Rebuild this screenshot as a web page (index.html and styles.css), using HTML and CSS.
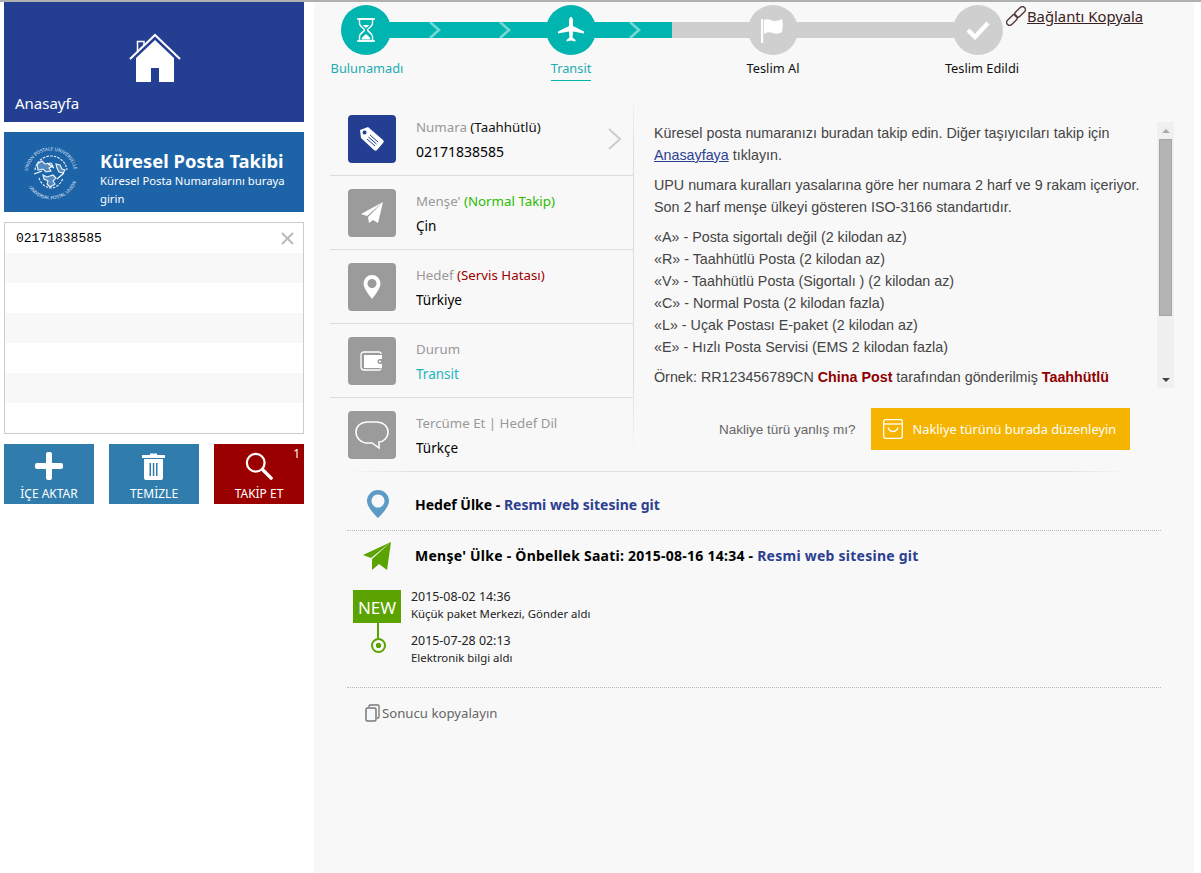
FILE: index.html
```html
<!DOCTYPE html>
<html lang="tr">
<head>
<meta charset="utf-8">
<title>Küresel Posta Takibi</title>
<link rel="stylesheet" href="styles.css">
</head>
<body>
<div class="page">
  <aside class="side">
    <a class="home">
      <svg class="home-ico" width="52" height="50" viewBox="0 0 52 50"><path d="M8.500 18V8.500h6.500v4" fill="none" stroke="#fff" stroke-width="1.500"/><path d="M1 26L26 2l25 24" fill="none" stroke="#fff" stroke-width="2"/><path fill="#fff" fill-rule="evenodd" d="M7 25L26 7l19 18v24H7zM22 35v14h8V35z"/></svg>
      <span class="home-label">Anasayfa</span>
    </a>
    <div class="upu">
      <svg class="upu-logo" width="56" height="56" viewBox="0 0 56 56">
        <defs><path id="upuring" d="M4.500 30a23.500 23.500 0 1 1 47 0"/><path id="upuring2" d="M2 34a26.500 26.500 0 0 0 52 0"/></defs>
        <text class="upu-ring"><textPath href="#upuring" startOffset="3">UNION POSTALE UNIVERSELLE</textPath></text>
        <text class="upu-ring"><textPath href="#upuring2" startOffset="10">UNIVERSAL POSTAL UNION</textPath></text>
        <path d="M12 26c1-8 8-14 16-14s15 6 16 14M16 34c2 6 7 10 12 10s10-4 12-10" fill="none" stroke="#e3edf6" stroke-width="1.200" stroke-dasharray="2.500 1.200"/>
        <path d="M14 20l5-3 3 3 6-1 2 3-4 2 2 3-5 1-3-3-5 1zM20 31l4 2 6-2 3 3-3 3 2 3-5 3-3-3 1-3-4-2zM33 20l4 1 2 4 3 1-2 3-4-1-2-4z" fill="#fff" fill-opacity=".25" stroke="#eef4fa" stroke-width="1.100"/>
        <path d="M11 30l8-3M34 35l7-6M24 19l7 5" stroke="#fff" stroke-width="1.100" fill="none"/>
      </svg>
      <div class="upu-copy">
        <div class="upu-title">Küresel Posta Takibi</div>
        <div class="upu-sub">Küresel Posta Numaralarını buraya girin</div>
      </div>
    </div>
    <div class="numlist">
      <div class="numrow"><span>02171838585</span>
        <svg class="clear" width="13" height="13" viewBox="0 0 13 13"><path d="M1 1l11 11M12 1L1 12" stroke="#bbb" stroke-width="2"/></svg>
      </div>
      <div class="numrow"></div><div class="numrow"></div><div class="numrow"></div>
      <div class="numrow"></div><div class="numrow"></div><div class="numrow"></div>
    </div>
    <div class="actions">
      <a class="act act-blue">
        <svg width="28" height="28" viewBox="0 0 28 28"><path d="M11 2a2 2 0 0 1 2-2h2a2 2 0 0 1 2 2v9h9a2 2 0 0 1 2 2v2a2 2 0 0 1-2 2h-9v9a2 2 0 0 1-2 2h-2a2 2 0 0 1-2-2v-9H2a2 2 0 0 1-2-2v-2a2 2 0 0 1 2-2h9z" fill="#fff"/></svg>
        <span>İÇE AKTAR</span>
      </a>
      <a class="act act-blue">
        <svg width="24" height="28" viewBox="0 0 24 28"><path d="M0 3h8V1.500h7V3h8v3H0z" fill="#fff"/><path fill="#fff" fill-rule="evenodd" d="M2 7h19v19a2 2 0 0 1-2 2H4a2 2 0 0 1-2-2zM7.500 11v13h1.500V11zM10.800 11v13h1.500V11zM14 11v13h1.500V11z"/></svg>
        <span>TEMİZLE</span>
      </a>
      <a class="act act-red">
        <svg width="30" height="30" viewBox="0 0 30 30"><circle cx="11.500" cy="11.500" r="9.500" fill="none" stroke="#fff" stroke-width="2.400"/><path d="M19 19l9 9" stroke="#fff" stroke-width="3.600" stroke-linecap="round"/></svg>
        <span>TAKİP ET</span>
        <b class="count">1</b>
      </a>
    </div>
  </aside>

  <main class="main">
    <div class="topbar">
      <div class="steps">
        <div class="track">
          <i class="track-on"></i>
          <svg class="chev chev1" width="12" height="16" viewBox="0 0 12 16"><path d="M1 0l9 8-9 8" fill="none" stroke="#74d8d3" stroke-width="2.600"/></svg>
          <svg class="chev chev2" width="12" height="16" viewBox="0 0 12 16"><path d="M1 0l9 8-9 8" fill="none" stroke="#74d8d3" stroke-width="2.600"/></svg>
          <svg class="chev chev3" width="12" height="16" viewBox="0 0 12 16"><path d="M1 0l9 8-9 8" fill="none" stroke="#74d8d3" stroke-width="2.600"/></svg>
        </div>
        <div class="step step-on step-a">
          <div class="dot"><svg width="20" height="24" viewBox="0 0 20 24"><path d="M1 1h18M1 23h18" stroke="#fff" stroke-width="1.400"/><path d="M3.500 1v4.500c0 3 5 5 5 6.500s-5 3.500-5 6.500V23h13v-4.500c0-3-5-5-5-6.500s5-3.500 5-6.500V1z" fill="none" stroke="#fff" stroke-width="1.400"/><path d="M5.500 21.500c.5-3 3.500-4 4.500-5.500 1 1.500 4 2.500 4.500 5.500zM6.500 7h7l-3.500 3z" fill="#fff"/></svg></div>
          <span class="step-label">Bulunamadı</span>
        </div>
        <div class="step step-on step-b step-current">
          <div class="dot"><svg width="26" height="26" viewBox="0 0 26 26"><path d="M13 0c1.400 0 2 2 2 4v5l11 5.500v2L15 14.500l-.5 6 3 2.500v1.500l-4.500-1-4.500 1V23l3-2.500-.5-6L0 16.500v-2L11 9V4c0-2 .6-4 2-4z" fill="#fff"/></svg></div>
          <span class="step-label">Transit</span>
        </div>
        <div class="step step-c">
          <div class="dot"><svg width="24" height="26" viewBox="0 0 24 26"><path d="M1 2v24" stroke="#fff" stroke-width="2.400"/><path d="M3 3c5-2 7 1 10 1s6-1 8-2c1 4 1 8 0 13-3 2-6 2-9 1-3-1-6-1-9 1z" fill="#fff"/></svg></div>
          <span class="step-label">Teslim Al</span>
        </div>
        <div class="step step-d">
          <div class="dot"><svg width="24" height="20" viewBox="0 0 24 20"><path d="M2 10l7 7L22 3" fill="none" stroke="#fff" stroke-width="4.400"/></svg></div>
          <span class="step-label">Teslim Edildi</span>
        </div>
      </div>
      <a class="copylink">
        <svg width="20" height="20" viewBox="0 0 20 20"><g fill="none" stroke="#553a3a" stroke-width="1.400" transform="rotate(-45 10 10)"><rect x="-2" y="7" width="12.500" height="6" rx="3"/><rect x="9.500" y="7" width="12.500" height="6" rx="3"/></g></svg>
        <span>Bağlantı Kopyala</span>
      </a>
    </div>

    <div class="detail">
      <div class="info">
        <div class="irow">
          <div class="iico iico-on"><svg width="30" height="30" viewBox="0 0 30 30"><path fill="#fff" fill-rule="evenodd" d="M3 6l8-3 15 13c1 1 1 2 0 3l-6 7c-1 1-2 1-3 0L4 14zM7.500 6.500a2 2 0 1 0 .1 0z"/><path d="M13 11l8 7M11.500 13l8 7M10 15l8 7" stroke="#24408f" stroke-width="1"/></svg></div>
          <div class="itext"><div class="ilabel">Numara <em class="c-dark">(Taahhütlü)</em></div><div class="ivalue ivalue-num">02171838585</div></div>
          <svg class="ichev" width="14" height="22" viewBox="0 0 14 22"><path d="M1 1l11 10L1 21" fill="none" stroke="#ccc" stroke-width="2"/></svg>
        </div>
        <div class="irow">
          <div class="iico"><svg width="24" height="24" viewBox="0 0 24 24"><path d="M23 1L1 13l6 2zM23 1L8 16l1 6 4-3 5 3z" fill="#fff"/></svg></div>
          <div class="itext"><div class="ilabel">Menşe' <em class="c-green">(Normal Takip)</em></div><div class="ivalue">Çin</div></div>
        </div>
        <div class="irow">
          <div class="iico"><svg width="18" height="24" viewBox="0 0 18 24"><path fill="#fff" fill-rule="evenodd" d="M9 0a8.500 8.500 0 0 1 8.500 8.500C17.500 14 9 24 9 24S.5 14 .5 8.500A8.500 8.500 0 0 1 9 0zm0 4a4.500 4.500 0 1 0 .01 0z"/></svg></div>
          <div class="itext"><div class="ilabel">Hedef <em class="c-red">(Servis Hatası)</em></div><div class="ivalue">Türkiye</div></div>
        </div>
        <div class="irow">
          <div class="iico"><svg width="24" height="20" viewBox="0 0 24 20"><path d="M21 3V2.500C21 1.500 20 1 19 1H4C2 1 1 2 1 4v12c0 2 1 3 3 3h15c1 0 2-.5 2-1.500" fill="none" stroke="#fff" stroke-width="1.300"/><path fill="#fff" fill-rule="evenodd" d="M4 4h18v4h-2a2.500 2.500 0 0 0 0 5h2v4H4zM20 9.500a1 1 0 1 0 .01 0z"/></svg></div>
          <div class="itext"><div class="ilabel">Durum</div><div class="ivalue c-teal">Transit</div></div>
        </div>
        <div class="irow irow-last">
          <div class="iico"><svg width="34" height="30" viewBox="0 0 34 30"><path d="M12 2h10c6 0 11 4 11 10s-5 10-9 10v6l-7-5h-5C6 23 1 18 1 12S6 2 12 2z" fill="none" stroke="#fff" stroke-width="1.500"/></svg></div>
          <div class="itext"><div class="ilabel">Tercüme Et | Hedef Dil</div><div class="ivalue">Türkçe</div></div>
        </div>
      </div>

      <div class="help">
        <div class="helpbox">
          <div class="helptext">
            <p>Küresel posta numaranızı buradan takip edin. Diğer taşıyıcıları takip için <a class="inlink">Anasayfaya</a> tıklayın.</p>
            <p>UPU numara kuralları yasalarına göre her numara 2 harf ve 9 rakam içeriyor. Son 2 harf menşe ülkeyi gösteren ISO-3166 standartıdır.</p>
            <p>«A» - Posta sigortalı değil (2 kilodan az)<br>«R» - Taahhütlü Posta (2 kilodan az)<br>«V» - Taahhütlü Posta (Sigortalı ) (2 kilodan az)<br>«C» - Normal Posta (2 kilodan fazla)<br>«L» - Uçak Postası E-paket (2 kilodan az)<br>«E» - Hızlı Posta Servisi (EMS 2 kilodan fazla)</p>
            <p>Örnek: RR123456789CN <b>China Post</b> tarafından gönderilmiş <b>Taahhütlü</b></p>
          </div>
          <div class="sbar">
            <i class="sarrow sarrow-up"></i>
            <div class="sthumb"></div>
            <i class="sarrow sarrow-down"></i>
          </div>
        </div>
        <div class="wrong">
          <span>Nakliye türü yanlış mı?</span>
          <a class="edit">
            <svg width="20" height="20" viewBox="0 0 20 20"><rect x=".7" y=".7" width="18.600" height="18.600" rx="2" fill="none" stroke="#fff" stroke-width="1.300"/><path d="M1 5h18" stroke="#fff" stroke-width="1.300"/><path d="M5 8.500c1 3 3 4 5 4s4-1 5-4" fill="none" stroke="#fff" stroke-width="1.300"/></svg>
            <span>Nakliye türünü burada düzenleyin</span>
          </a>
        </div>
      </div>
    </div>

    <div class="rule-soft"></div>

    <div class="results">
      <div class="rrow rrow-dest">
        <svg class="rico" width="22" height="28" viewBox="0 0 22 28"><path fill="#5b9bc4" fill-rule="evenodd" d="M11 0a11 11 0 0 1 11 11C22 18 11 28 11 28S0 18 0 11A11 11 0 0 1 11 0zm0 4.500a6.500 6.500 0 1 0 .01 0z"/></svg>
        <span class="rtitle">Hedef Ülke - <a class="go">Resmi web sitesine git</a></span>
      </div>
      <div class="rrow rrow-origin">
        <svg class="rico" width="30" height="30" viewBox="0 0 30 30"><path d="M29 1L1 14l8 3zM29 1L10 18l0 11 7-6 8 6z" fill="#5ba300"/></svg>
        <span class="rtitle">Menşe' Ülke - Önbellek Saati: 2015-08-16 14:34 - <a class="go">Resmi web sitesine git</a></span>
      </div>
      <div class="tl">
        <div class="tlmark">
          <div class="newtag">NEW</div>
          <i class="tlline"></i>
          <i class="tldot"></i>
        </div>
        <div class="tlevents">
          <div class="tlev"><div class="tldate">2015-08-02 14:36</div><div class="tldesc">Küçük paket Merkezi, Gönder aldı</div></div>
          <div class="tlev"><div class="tldate">2015-07-28 02:13</div><div class="tldesc">Elektronik bilgi aldı</div></div>
        </div>
      </div>
      <a class="copyres">
        <svg width="15" height="18" viewBox="0 0 15 18"><path d="M4 3V2a1 1 0 0 1 1-1h8a1 1 0 0 1 1 1v11a1 1 0 0 1-1 1h-1" fill="none" stroke="#777" stroke-width="1.300"/><rect x="1" y="4" width="10" height="13" rx="1.500" fill="none" stroke="#777" stroke-width="1.500"/></svg>
        <span>Sonucu kopyalayın</span>
      </a>
    </div>
  </main>
</div>
</body>
</html>
```
FILE: styles.css
```css
* { box-sizing: border-box; }
html, body { margin: 0; padding: 0; background: #fff; }
body { font-family: "Noto Sans", "Open Sans", sans-serif; font-size: 14px; color: #000; border-top: 2px solid #b0b0b0; height: 873px; overflow: hidden; }
a { text-decoration: none; color: inherit; }
em { font-style: normal; }
p { margin: 0; }
.page { display: flex; height: 871px; }

.side { width: 300px; margin-left: 4px; margin-right: 10px; display: flex; flex-direction: column; gap: 10px; flex: none; }
.home { display: block; height: 120px; background: #243f92; color: #fff; position: relative; }
.home-ico { display: block; position: absolute; left: 125px; top: 31px; }
.home-label { position: absolute; left: 11px; bottom: 9px; font-size: 15px; }
.upu { height: 80px; background: #1c63a8; color: #fff; display: flex; align-items: flex-start; }
.upu-logo { margin: 12px 0 0 19px; flex: none; overflow: visible; }
.upu-ring { font-size: 4.600px; fill: #e3edf6; }
.upu-copy { margin: 17px 0 0 21px; width: 192px; }
.upu-title { font-size: 18.400px; font-weight: 700; line-height: 24px; white-space: nowrap; }
.upu-sub { font-size: 11.300px; line-height: 18px; margin-top: -1px; }
.numlist { height: 212px; border: 1px solid #ccc; background: #fff; }
.numrow { height: 30px; display: flex; align-items: center; justify-content: space-between; padding: 0 9px 0 11px; font-family: "Liberation Mono", monospace; font-size: 13px; }
.numrow:nth-child(even) { background: #f8f8f8; }
.clear { display: block; }
.actions { display: flex; gap: 15px; }
.act { width: 90px; height: 60px; color: #fff; display: flex; flex-direction: column; align-items: center; font-size: 12px; position: relative; padding-top: 8px; }
.act svg { display: block; height: 28px; }
.act span { line-height: 16px; margin-top: 6px; }
.act-blue { background: #307dad; }
.act-red { background: #9b0000; }
.count { position: absolute; right: 4px; top: 3px; font-weight: 400; font-size: 12px; line-height: 14px; }

.main { width: 880px; background: #f8f8f8; flex: none; display: flex; flex-direction: column; }
.topbar { height: 100px; position: relative; }
.steps { position: relative; display: flex; padding-top: 3px; }
.track { position: absolute; left: 52px; top: 20px; width: 612px; height: 16px; background: #cfcfcf; }
.track-on { display: block; width: 306px; height: 16px; background: #00b4b0; }
.chev { position: absolute; top: 0; }
.chev1 { left: 63px; }
.chev2 { left: 133px; }
.chev3 { left: 263px; }
.step { position: relative; width: 100px; display: flex; flex-direction: column; align-items: center; font-size: 12.800px; flex: none; }
.step-a { margin-left: 2px; }
.step-a .step-label { margin-left: 2px; }
.step-b { margin-left: 105px; }
.step-c { margin-left: 102px; }
.step-d { margin-left: 105px; }
.step-d .step-label { margin-left: 8px; }
.dot { width: 50px; height: 50px; border-radius: 50%; background: #cfcfcf; display: flex; align-items: center; justify-content: center; }
.step-on .dot { background: #00b4b0; }
.step-label { line-height: 18px; margin-top: 4px; white-space: nowrap; color: #111; }
.step-on .step-label { color: #1cabb1; }
.step-current .step-label { border-bottom: 1px solid #00b4b0; padding-bottom: 3px; }
.copylink { position: absolute; left: 692px; top: 4px; display: flex; align-items: center; gap: 1px; font-size: 14.800px; color: #3a2222; }
.copylink span { text-decoration: underline; }

.detail { display: flex; height: 369px; }
.info { width: 304px; margin-left: 16px; flex: none; position: relative; }
.info::after { content: ""; position: absolute; right: 0; top: 0; bottom: 16px; width: 1px; background: linear-gradient(#f2f2f2, #ddd 15%, #ddd 80%, #f8f8f8); }
.irow { height: 74px; display: flex; align-items: center; padding-left: 18px; border-bottom: 1px solid #ddd; position: relative; }
.irow-last { border-bottom-color: transparent; }
.iico { width: 48px; height: 48px; border-radius: 4px; background: #9b9b9b; display: flex; align-items: center; justify-content: center; flex: none; }
.iico-on { background: #243f92; }
.itext { margin-left: 20px; font-size: 13.300px; padding-top: 2px; }
.ilabel { color: #999; line-height: 20px; }
.ivalue { line-height: 20px; margin-top: 5px; font-size: 13.500px; }
.ivalue-num { font-size: 14px; }
.c-dark { color: #111; }
.c-green { color: #2dbb00; }
.c-red { color: #9b0000; }
.c-teal { color: #1cb5bb; }
.ichev { position: absolute; right: 12px; top: 26px; }

.help { flex: none; width: 520px; margin-left: 20px; font-family: "Liberation Sans", sans-serif; font-size: 14.300px; color: #444; padding-top: 20px; }
.helpbox { display: flex; height: 266px; overflow: hidden; }
.helptext { width: 503px; line-height: 22px; }
.helptext p { margin-bottom: 8px; }
.helptext b { color: #900000; }
.inlink { color: #2d3f90; text-decoration: underline; }
.sbar { width: 17px; height: 266px; background: #f0f0f0; display: flex; flex-direction: column; align-items: center; flex: none; }
.sarrow { width: 0; height: 0; border-left: 4px solid transparent; border-right: 4px solid transparent; margin: 6px 0; }
.sarrow-up { border-bottom: 4px solid #aaa; margin-top: 7px; }
.sarrow-down { border-top: 4px solid #444; margin-top: auto; }
.sthumb { width: 13px; height: 177px; background: #b4b4b4; border: 1px solid #a4a4a4; }
.wrong { display: flex; align-items: center; height: 42px; margin-top: 20px; padding-left: 65px; gap: 15px; color: #666; font-size: 13.500px; }
.edit { width: 259px; height: 42px; background: #f5b400; color: #fff; display: flex; align-items: center; gap: 10px; padding-left: 12px; font-family: "Noto Sans", sans-serif; font-size: 12.800px; }
.edit svg { display: block; flex: none; }

.rule-soft { height: 1px; margin-left: 33px; width: 783px; background: linear-gradient(90deg, #f8f8f8, #e2e2e2 8%, #e2e2e2 92%, #f8f8f8); }
.results { margin-left: 33px; width: 814px; }
.rrow { display: flex; align-items: center; position: relative; font-weight: 700; font-size: 14px; }
.rrow-dest { height: 59px; padding-top: 6px; border-bottom: 1px dotted #bbb; }
.rrow-origin { height: 50px; padding-bottom: 2px; letter-spacing: .25px; }
.rico { position: absolute; left: 20px; }
.rrow-origin .rico { left: 15px; top: 10px; }
.rtitle { margin-left: 68px; }
.go { color: #2d3f90; }
.tl { display: flex; height: 107px; padding-left: 6px; border-bottom: 1px dotted #bbb; padding-top: 9px; font-size: 11.400px; color: #222; }
.tlmark { width: 58px; display: flex; flex-direction: column; align-items: flex-start; flex: none; }
.newtag { width: 48px; height: 33px; background: #5ba300; color: #fff; font-size: 17px; padding-top: 1px; display: flex; align-items: center; justify-content: center; }
.tlline { width: 2px; height: 15px; background: #5ba300; margin-left: 24px; }
.tldot { width: 15px; height: 15px; border: 2.500px solid #5ba300; border-radius: 50%; background: radial-gradient(circle, #5ba300 0 2.500px, #f8f8f8 3px); margin-left: 18px; }
.tlevents { display: flex; flex-direction: column; gap: 9px; margin-top: -2px; }
.tlev { line-height: 18px; }
.tldate { font-size: 12.400px; }
.tldesc { margin-top: -1px; }
.copyres { display: flex; align-items: center; gap: 2px; margin: 16px 0 0 18px; font-size: 13.200px; color: #666; }
.copyres svg { display: block; }
```
